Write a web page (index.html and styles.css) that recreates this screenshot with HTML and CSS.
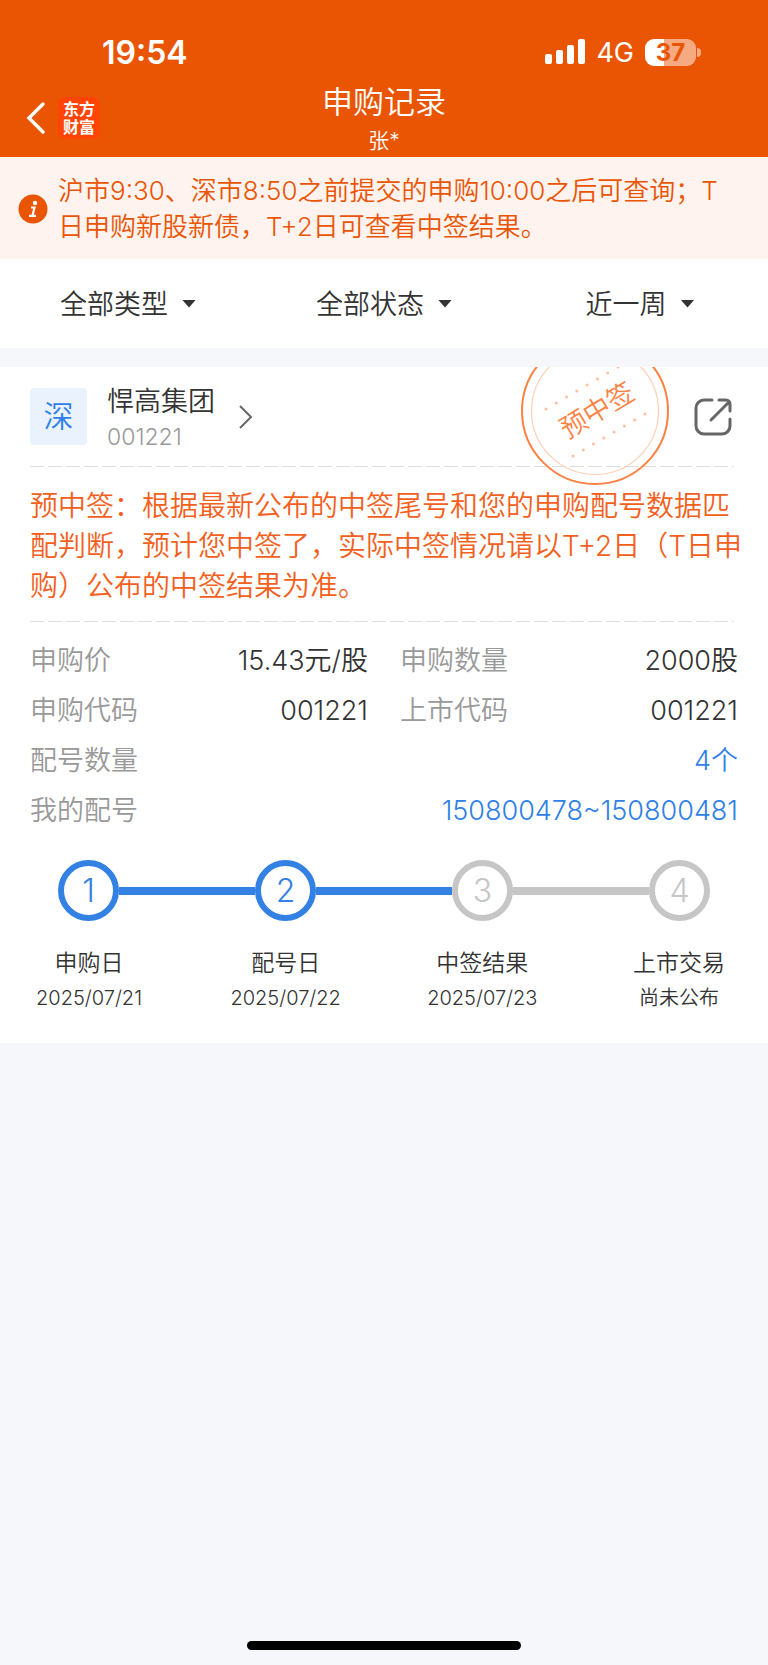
FILE: index.html
```html
<!DOCTYPE html>
<html lang="zh-CN">
<head>
  <meta charset="UTF-8" />
  <meta name="viewport" content="width=device-width, initial-scale=1.0" />
  <title>申购记录</title>
  <link rel="stylesheet" href="styles.css">
</head>
<body>
<header class="header">
  <div class="status-bar">
    <span class="time">19:54</span>
    <div class="status-icons">
      <svg class="signal" width="40" height="26" viewBox="0 0 40 26" fill="#fff">
        <rect x="0" y="15" width="7" height="10" rx="2"/>
        <rect x="11" y="11" width="7" height="14" rx="2"/>
        <rect x="22" y="6" width="7" height="19" rx="2"/>
        <rect x="33" y="0" width="7" height="25" rx="2"/>
      </svg>
      <span class="network">4G</span>
      <div class="battery"><span class="battery-level">37</span></div>
    </div>
  </div>
  <nav class="nav">
    <div class="nav-left">
      <button class="back" aria-label="返回">
        <svg width="20" height="34" viewBox="0 0 20 34" fill="none" stroke="#fff" stroke-width="3.4" stroke-linecap="round">
          <path d="M17 3L3 17l14 14"/>
        </svg>
      </button>
      <div class="logo">东方<br>财富</div>
    </div>
    <div class="nav-title">
      <h1>申购记录</h1>
      <p>张*</p>
    </div>
  </nav>
</header>

<div class="notice">
  <svg class="notice-icon" width="30" height="30" viewBox="0 0 30 30">
    <circle cx="15" cy="15" r="14.5" fill="#ea5504"/>
    <circle cx="17" cy="9" r="2.2" fill="#fff"/>
    <path d="M13 13.5h3.5l-2 8M11 21.8h7" fill="none" stroke="#fff" stroke-width="2.2"/>
  </svg>
  <p>沪市9:30、深市8:50之前提交的申购10:00之后可查询；T日申购新股新债，T+2日可查看中签结果。</p>
</div>

<div class="filters">
  <div class="filter"><select aria-label="类型"><option>全部类型</option></select></div>
  <div class="filter"><select aria-label="状态"><option>全部状态</option></select></div>
  <div class="filter"><select aria-label="时间"><option>近一周</option></select></div>
</div>

<main class="card">
  <!-- 预中签印章 -->
  <svg class="stamp" width="150" height="150" viewBox="-75 -75 150 150" fill="none">
    <circle r="73" stroke="#ff8142" stroke-width="2"/>
    <circle r="63.5" stroke="#ffd0b8" stroke-width="1.2"/>
    <path d="M-49-2L23-44M-22 45L50 3" stroke="#ffc0a0" stroke-width="3" stroke-linecap="round" stroke-dasharray="0 11.9"/>
    <text class="stamp-text" transform="rotate(-31)" x="2" y="10" text-anchor="middle">预中签</text>
  </svg>

  <div class="card-head">
    <span class="market">深</span>
    <a class="stock" href="#">
      <span class="stock-info">
        <strong>悍高集团</strong>
        <small>001221</small>
      </span>
      <svg width="14" height="24" viewBox="0 0 14 24" fill="none" stroke="#666" stroke-width="2">
        <path d="M1 1l11 11L1 23"/>
      </svg>
    </a>
    <button class="share" aria-label="分享">
      <svg width="38" height="38" viewBox="0 0 38 38" fill="none" stroke="#666" stroke-width="3" stroke-linecap="round" stroke-linejoin="round">
        <path d="M18 2H10a8 8 0 0 0-8 8v18a8 8 0 0 0 8 8h18a8 8 0 0 0 8-8v-7"/>
        <path d="M25 2h7a4 4 0 0 1 4 4v7M17 22L35 4"/>
      </svg>
    </button>
  </div>

  <p class="tip">预中签：根据最新公布的中签尾号和您的申购配号数据匹配判断，预计您中签了，实际中签情况请以T+2日（T日申购）公布的中签结果为准。</p>

  <dl class="details">
    <div><dt>申购价</dt><dd>15.43元/股</dd></div>
    <div><dt>申购数量</dt><dd>2000股</dd></div>
    <div><dt>申购代码</dt><dd>001221</dd></div>
    <div><dt>上市代码</dt><dd>001221</dd></div>
    <div class="wide"><dt>配号数量</dt><dd><a href="#">4个</a></dd></div>
    <div class="wide"><dt>我的配号</dt><dd><a href="#">150800478~150800481</a></dd></div>
  </dl>

  <div class="track">
    <span class="dot done">1</span>
    <i class="line done"></i>
    <span class="dot done">2</span>
    <i class="line done"></i>
    <span class="dot">3</span>
    <i class="line"></i>
    <span class="dot">4</span>
  </div>
  <ol class="steps">
    <li>申购日<small>2025/07/21</small></li>
    <li>配号日<small>2025/07/22</small></li>
    <li>中签结果<small>2025/07/23</small></li>
    <li>上市交易<small>尚未公布</small></li>
  </ol>
</main>

<div class="home-bar"></div>
</body>
</html>
```
FILE: styles.css
```css
* {
  box-sizing: border-box;
}
body {
  display: flex;
  flex-direction: column;
  min-height: 100vh;
  margin: 0;
  background: #f6f7fa;
  color: #333;
  font-family: Inter, "Noto Sans CJK SC", sans-serif;
  font-size: 27px;
  font-weight: 350;
}
h1, p, dl, dd, ol {
  margin: 0;
  padding: 0;
}
a {
  color: #2f80e8;
  text-decoration: none;
}
button {
  display: flex;
  padding: 0;
  border: none;
  background: none;
  cursor: pointer;
}

/* 顶部 */
.header {
  background: #ea5504;
  color: #fff;
}
.status-bar {
  display: flex;
  justify-content: space-between;
  align-items: center;
  height: 84px;
  padding: 20px 72px 0 102px;
}
.time {
  font-size: 32px;
  font-weight: 600;
}
.status-icons {
  display: flex;
  align-items: center;
  gap: 11px;
}
.network {
  font-size: 27px;
  font-weight: 400;
}
.battery {
  position: relative;
  width: 51px;
  height: 27px;
  border-radius: 9px;
  background: linear-gradient(90deg, #fff 37%, #f5aa82 37%);
  color: #ea5504;
  font-size: 24px;
  font-weight: 700;
  line-height: 27px;
  text-align: center;
}
.battery::after {
  content: "";
  position: absolute;
  top: 9px;
  right: -5px;
  width: 4px;
  height: 9px;
  border-radius: 0 4px 4px 0;
  background: #f5aa82;
}
.nav {
  display: grid;
  grid-template-columns: 1fr auto 1fr;
  height: 73px;
  padding: 0 26px;
}
.nav-left {
  display: flex;
  align-items: center;
  gap: 12px;
  height: 68px;
}
.logo {
  width: 42px;
  height: 42px;
  padding-top: 3px;
  border-radius: 8px;
  background: #ff4405;
  font-size: 16px;
  font-weight: 700;
  line-height: 18px;
  text-align: center;
}
.nav-title {
  text-align: center;
}
.nav-title h1 {
  font-size: 31px;
  font-weight: 350;
  line-height: 36px;
}
.nav-title p {
  font-size: 21px;
  line-height: 42px;
}

/* 提示 */
.notice {
  display: flex;
  align-items: center;
  gap: 10px;
  padding: 16px 30px 14px 18px;
  background: #fff3ef;
  color: #ea5504;
  font-size: 26px;
  line-height: 36px;
}
.notice-icon {
  flex: none;
}

/* 筛选 */
.filters {
  display: grid;
  grid-template-columns: repeat(3, 1fr);
  height: 89px;
  margin-bottom: 19px;
  background: #fff;
}
.filter {
  display: flex;
  justify-content: center;
  align-items: center;
}
.filter select {
  appearance: none;
  padding: 2px 28px 0 0;
  border: none;
  background: none;
  color: #333;
  font: inherit;
}
.filter::after {
  content: "";
  width: 14px;
  height: 8px;
  margin-left: -14px;
  background: #333;
  clip-path: polygon(0 0, 100% 0, 50% 100%);
  pointer-events: none;
}

/* 卡片 */
.card {
  position: relative;
  overflow: hidden;
  padding: 0 30px 27px;
  background: #fff;
}
.stamp {
  position: absolute;
  top: -31px;
  right: 98px;
}
.stamp-text {
  fill: #ff8142;
  font-size: 27px;
}
.card-head {
  display: flex;
  align-items: center;
  height: 99px;
  padding-right: 6px;
}
.market {
  width: 57px;
  border-radius: 4px;
  background: #e9f2fd;
  color: #2f80e8;
  font-size: 30px;
  line-height: 57px;
  text-align: center;
}
.stock {
  display: flex;
  align-items: center;
  gap: 24px;
  margin-left: 20px;
  color: #333;
}
.stock-info {
  display: flex;
  flex-direction: column;
  padding-top: 4px;
}
.stock strong {
  font-weight: 350;
  line-height: 36px;
}
.stock small {
  color: #999;
  font-size: 23px;
  line-height: 34px;
}
.share {
  margin-left: auto;
}
.tip, .details {
  background: repeating-linear-gradient(90deg, #ddd 0 14px, transparent 14px 18px) 0 0 / 704px 1px no-repeat;
}
.tip {
  margin-right: -6px;
  padding: 20px 0 15px;
  color: #f4601c;
  font-size: 28px;
  line-height: 40px;
}
.details {
  display: grid;
  grid-template-columns: 1fr 1fr;
  column-gap: 32px;
  padding-top: 15px;
  line-height: 50px;
}
.details div {
  display: flex;
  justify-content: space-between;
}
.details .wide {
  grid-column: 1 / -1;
}
.details dt {
  color: #999;
}

/* 进度 */
.track {
  display: flex;
  align-items: center;
  margin-top: 24px;
  padding: 0 28px;
}
.dot {
  width: 61px;
  height: 61px;
  border: 6px solid #c6c6c6;
  border-radius: 50%;
  color: #c6c6c6;
  font-size: 32px;
  line-height: 49px;
  text-align: center;
}
.dot.done {
  border-color: #3381e3;
  color: #3381e3;
}
.line {
  flex: 1;
  height: 8px;
  background: #c6c6c6;
}
.line.done {
  background: #3381e3;
}
.steps {
  display: flex;
  justify-content: space-between;
  margin-top: 24px;
  list-style: none;
}
.steps li {
  width: 118px;
  font-size: 23px;
  line-height: 36px;
  text-align: center;
}
.steps small {
  display: block;
  font-size: 20px;
  line-height: 35px;
}

.home-bar {
  width: 274px;
  height: 9px;
  margin: auto auto 15px;
  border-radius: 5px;
  background: #000;
}
```
